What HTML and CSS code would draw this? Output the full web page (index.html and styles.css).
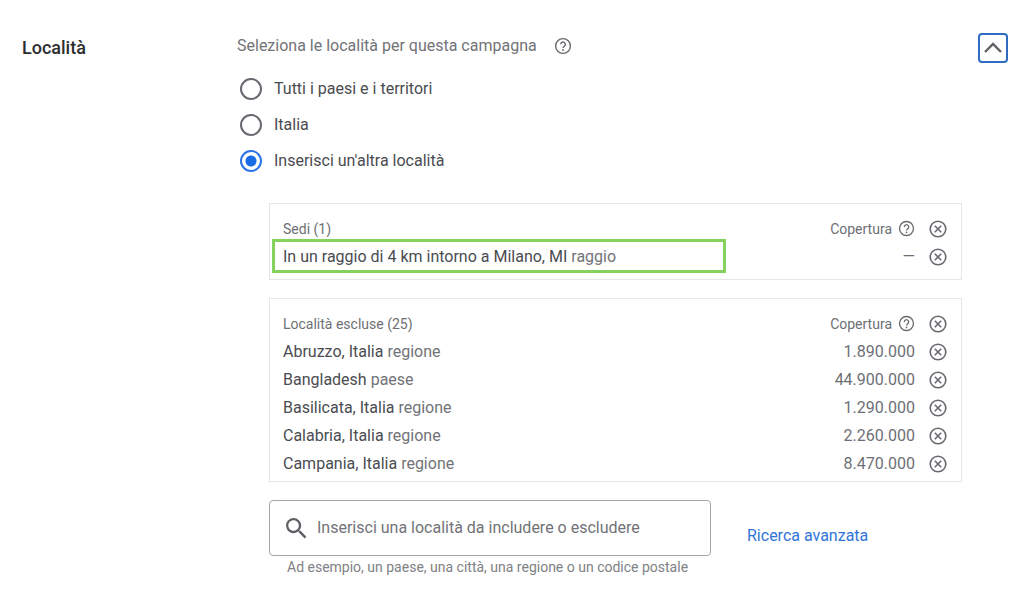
FILE: index.html
```html
<!DOCTYPE html>
<html lang="it">
<head>
<meta charset="utf-8">
<meta name="viewport" content="width=device-width, initial-scale=1">
<title>Località</title>
<link rel="stylesheet" href="styles.css">
</head>
<body>
<svg class="sprite" aria-hidden="true">
  <symbol id="help" viewBox="0 0 18 18">
    <circle cx="9" cy="9" r="7.4" fill="none" stroke="currentColor" stroke-width="1.4"/>
    <path d="M6.7 7.3a2.3 2.3 0 1 1 3.6 1.9c-.8.6-1.3 1-1.3 1.9" fill="none" stroke="currentColor" stroke-width="1.4"/>
    <circle cx="9" cy="13" r=".9" fill="currentColor"/>
  </symbol>
  <symbol id="remove" viewBox="0 0 18 18">
    <circle cx="9" cy="9" r="7.8" fill="none" stroke="currentColor" stroke-width="1.6"/>
    <path d="M5.8 5.8l6.4 6.4M12.2 5.8l-6.4 6.4" fill="none" stroke="currentColor" stroke-width="1.6"/>
  </symbol>
</svg>
<section class="settings">
  <h2 class="title">Località</h2>
  <div class="content">
    <fieldset class="options">
      <legend class="prompt">Seleziona le località per questa campagna
        <button class="icon-button" type="button" aria-label="Guida"><svg class="icon"><use href="#help"/></svg></button>
      </legend>
      <label class="option"><input class="radio" type="radio" name="area"><span>Tutti i paesi e i territori</span></label>
      <label class="option"><input class="radio" type="radio" name="area"><span>Italia</span></label>
      <label class="option"><input class="radio" type="radio" name="area" checked><span>Inserisci un'altra località</span></label>
    </fieldset>
    <div class="details">
      <div class="panel panel-included">
        <table class="places">
          <thead>
            <tr><th scope="col">Sedi (1)</th><th class="reach" scope="col"><span class="reach-label">Copertura <button class="icon-button" type="button" aria-label="Guida copertura"><svg class="icon icon-small"><use href="#help"/></svg></button></span></th><td class="action"><button class="icon-button" type="button" aria-label="Rimuovi tutte le sedi"><svg class="icon"><use href="#remove"/></svg></button></td></tr>
          </thead>
          <tbody>
            <tr><td>In un raggio di 4 km intorno a Milano, MI <span class="kind">raggio</span></td><td class="reach">—</td><td class="action"><button class="icon-button" type="button" aria-label="Rimuovi Milano"><svg class="icon"><use href="#remove"/></svg></button></td></tr>
          </tbody>
        </table>
        <div class="highlight"></div>
      </div>
      <div class="panel">
        <table class="places">
          <thead>
            <tr><th scope="col">Località escluse (25)</th><th class="reach" scope="col"><span class="reach-label">Copertura <button class="icon-button" type="button" aria-label="Guida copertura"><svg class="icon icon-small"><use href="#help"/></svg></button></span></th><td class="action"><button class="icon-button" type="button" aria-label="Rimuovi tutte le località escluse"><svg class="icon"><use href="#remove"/></svg></button></td></tr>
          </thead>
          <tbody>
            <tr><td>Abruzzo, Italia <span class="kind">regione</span></td><td class="reach">1.890.000</td><td class="action"><button class="icon-button" type="button" aria-label="Rimuovi Abruzzo"><svg class="icon"><use href="#remove"/></svg></button></td></tr>
            <tr><td>Bangladesh <span class="kind">paese</span></td><td class="reach">44.900.000</td><td class="action"><button class="icon-button" type="button" aria-label="Rimuovi Bangladesh"><svg class="icon"><use href="#remove"/></svg></button></td></tr>
            <tr><td>Basilicata, Italia <span class="kind">regione</span></td><td class="reach">1.290.000</td><td class="action"><button class="icon-button" type="button" aria-label="Rimuovi Basilicata"><svg class="icon"><use href="#remove"/></svg></button></td></tr>
            <tr><td>Calabria, Italia <span class="kind">regione</span></td><td class="reach">2.260.000</td><td class="action"><button class="icon-button" type="button" aria-label="Rimuovi Calabria"><svg class="icon"><use href="#remove"/></svg></button></td></tr>
            <tr><td>Campania, Italia <span class="kind">regione</span></td><td class="reach">8.470.000</td><td class="action"><button class="icon-button" type="button" aria-label="Rimuovi Campania"><svg class="icon"><use href="#remove"/></svg></button></td></tr>
          </tbody>
        </table>
      </div>
      <div class="search-row">
        <div class="search">
          <label class="search-box">
            <svg class="search-icon" viewBox="3 3 18 18" aria-hidden="true"><path fill="currentColor" d="M15.5 14h-.79l-.28-.27A6.47 6.47 0 0 0 16 9.5 6.5 6.5 0 1 0 9.500 16c1.610 0 3.090-.59 4.230-1.570l.27.28v.79l5 4.990L20.490 19l-4.990-5zm-6 0C7.010 14 5 11.990 5 9.500S7.010 5 9.500 5 14 7.010 14 9.500 11.990 14 9.500 14z"/></svg>
            <input class="search-input" type="text" aria-label="Località" aria-describedby="hint" placeholder="Inserisci una località da includere o escludere">
          </label>
          <p class="hint" id="hint">Ad esempio, un paese, una città, una regione o un codice postale</p>
        </div>
        <a class="link" href="#">Ricerca avanzata</a>
      </div>
    </div>
  </div>
  <button class="collapse" type="button" aria-label="Comprimi"><svg class="chevron" viewBox="0 0 20 20"><path d="M2 14l8-8 8 8" fill="none" stroke="currentColor" stroke-width="2.400"/></svg></button>
</section>
</body>
</html>
```
FILE: styles.css
```css
* {
  box-sizing: border-box;
}

body {
  margin: 0;
  background: #fff;
  color: #4a4c50;
  font: 16px/24px Roboto, "Liberation Sans", sans-serif;
}

button,
input {
  font: inherit;
  color: inherit;
}

.sprite {
  display: none;
}

.settings {
  display: grid;
  grid-template-columns: 199px 1fr 30px;
  align-items: start;
  gap: 16px;
  padding: 33px 16px 24px 22px;
}

.title {
  margin: 3px 0 0;
  color: #2b2c2f;
  font-size: 18px;
  font-weight: 500;
  line-height: 24px;
}

.content {
  padding-top: 1px;
}

.options {
  display: flex;
  flex-direction: column;
  gap: 12px;
  min-width: 0;
  margin: 0;
  padding: 0;
  border: 0;
}

.prompt {
  display: flex;
  align-items: center;
  gap: 17px;
  padding: 0;
  margin-bottom: 19px;
  color: #717377;
}

.icon-button {
  display: flex;
  padding: 0;
  border: 0;
  background: none;
  color: #66696e;
  cursor: pointer;
}

.icon {
  display: block;
  width: 18px;
  height: 18px;
}

.icon-small {
  width: 17px;
  height: 17px;
}

.option {
  display: flex;
  align-items: center;
  gap: 12px;
  padding-left: 3px;
}

.radio {
  appearance: none;
  width: 22px;
  height: 22px;
  margin: 0;
  border: 2px solid #66696e;
  border-radius: 50%;
}

.radio:checked {
  border-color: #2a73e8;
  background: radial-gradient(circle, #1a6be6 5px, transparent 6px);
}

.details {
  display: flex;
  flex-direction: column;
  gap: 18px;
  padding: 30px 0 0 32px;
}

.panel {
  position: relative;
  padding: 10px 14px 3px 13px;
  border: 1px solid #e6e6e9;
}

.panel-included {
  padding-bottom: 8px;
}

.places {
  width: 100%;
  border-collapse: collapse;
}

.places tr {
  height: 28px;
}

.places thead tr {
  height: 29px;
}

.places th,
.places td {
  padding: 0;
  text-align: left;
  vertical-align: middle;
}

.places th {
  color: #6d6f74;
  font-size: 14px;
  font-weight: 400;
}

.places .reach {
  color: #6d6f74;
  text-align: right;
}

.reach-label {
  display: flex;
  justify-content: flex-end;
  align-items: center;
  gap: 6px;
}

.places .action {
  width: 32px;
  padding-left: 14px;
}

.kind {
  color: #717377;
}

.highlight {
  position: absolute;
  top: 35px;
  left: 2px;
  width: 454px;
  max-width: 80%;
  height: 34px;
  border: 3px solid #85d35f;
  pointer-events: none;
}

.search-row {
  display: flex;
  align-items: flex-start;
  gap: 36px;
}

.search {
  flex: 0 1 442px;
}

.search-box {
  display: flex;
  align-items: center;
  gap: 10px;
  padding: 15px 16px;
  border: 1px solid #a5a6a9;
  border-radius: 4px;
  color: #5f6166;
}

.search-icon {
  flex: none;
  width: 21px;
  height: 21px;
}

.search-input {
  flex: 1;
  min-width: 0;
  height: 24px;
  padding: 0;
  border: 0;
  outline: 0;
  background: none;
}

.search-input::placeholder {
  color: #717377;
  opacity: 1;
}

.hint {
  margin: 1px 0 0 18px;
  color: #808185;
  font-size: 14px;
  line-height: 20px;
}

.link {
  margin-top: 24px;
  color: #2f75d8;
  text-decoration: none;
}

.collapse {
  display: grid;
  place-items: center;
  width: 30px;
  height: 30px;
  padding: 0;
  border: 2px solid #2d6cc0;
  border-radius: 4px;
  background: #fff;
  color: #5f6166;
}

.chevron {
  width: 20px;
  height: 20px;
}
```
